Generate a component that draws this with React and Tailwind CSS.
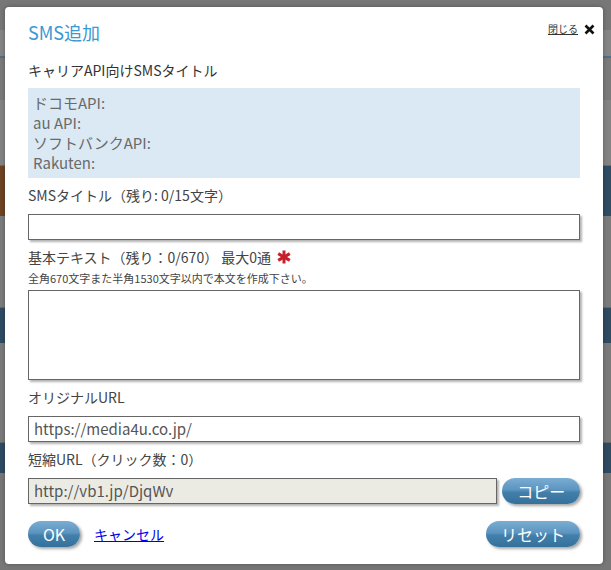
import React from "react";

const font = { fontFamily: '"Noto Sans CJK JP", "Noto Sans", sans-serif' };

function PillButton({ children, className = "" }) {
  return (
    <button
      className={`flex items-center justify-center rounded-full h-[26px] text-white text-[16px] leading-none bg-[linear-gradient(to_bottom,#7badd2_0%,#5c95c0_45%,#4280ab_55%,#34709a_100%)] shadow-[2px_2px_3px_rgba(0,0,0,0.35)] ${className}`}
    >
      {children}
    </button>
  );
}

function Asterisk() {
  return (
    <svg width="14" height="14" viewBox="0 0 14 14" className="ml-[6px]">
      <g stroke="#c8202a" strokeWidth="3" strokeLinecap="butt">
        <line x1="7" y1="0.5" x2="7" y2="13.5" />
        <line x1="1.2" y1="3.6" x2="12.8" y2="10.4" />
        <line x1="1.2" y1="10.4" x2="12.8" y2="3.6" />
      </g>
    </svg>
  );
}

export default function App() {
  return (
    <div className="relative w-[611px] h-[570px] overflow-hidden bg-[#757575]" style={font}>
      {/* page behind the overlay */}
      <div className="flex flex-col w-full">
        <div className="h-[30px] bg-[#777777]"></div>
        <div className="h-[28px] bg-[#858585] border-b-2 border-[#4d6f8a]"></div>
        <div className="h-[42px] bg-[#7a7a7a]"></div>
        <div className="h-[66px] bg-[#838383] border-b border-[#6a6a6a]"></div>
        <div className="h-[50px] bg-[linear-gradient(to_right,#6d4424_0_5px,#777_5px_598px,#2f4c63_598px)]"></div>
        <div className="h-[92px] bg-[#7b7b7b] border-b border-[#666]"></div>
        <div className="h-[35px] bg-[#2f4b62]"></div>
        <div className="h-[100px] bg-[#7a7a7a] border-b border-[#666]"></div>
        <div className="h-[30px] bg-[#2f4b62]"></div>
        <div className="h-[96px] bg-[#777777]"></div>
      </div>

      {/* dialog */}
      <div className="absolute left-[5px] top-[7px] w-[598px] h-[557px] bg-white rounded-[4px] px-[23px] pt-[13px] text-[#333] shadow-[0_0_4px_rgba(0,0,0,0.3)]">
        <div className="absolute right-[8px] top-[15px] flex items-center gap-[6px]">
          <span className="text-[10px] leading-[14px] underline text-[#333]">閉じる</span>
          <svg width="11" height="11" viewBox="0 0 11 11">
            <path d="M1.5 1.5 L9.5 9.5 M9.5 1.5 L1.5 9.5" stroke="#111" strokeWidth="2.6" />
          </svg>
        </div>

        <div className="text-[18px] leading-[24px] text-[#3a98d3]">SMS追加</div>

        <div className="mt-[16px] text-[14px] leading-[20px]">キャリアAPI向けSMSタイトル</div>

        <div className="mt-[8px] h-[90px] bg-[#dae9f4] pl-[5px] pt-[5px] text-[15px] leading-[20px] text-[#6a6a6a]">
          <div>ドコモAPI:</div>
          <div>au API:</div>
          <div>ソフトバンクAPI:</div>
          <div>Rakuten:</div>
        </div>

        <div className="mt-[7px] text-[14px] leading-[20px] text-[#444]">SMSタイトル（残り: 0/15文字）</div>
        <div className="mt-[9px] h-[26px] border border-[#666] bg-white shadow-[2px_2px_2px_rgba(0,0,0,0.3)]"></div>

        <div className="mt-[7px] flex items-center text-[14px] leading-[20px] text-[#444]">
          <span>基本テキスト（残り：0/670） 最大0通</span>
          <Asterisk />
        </div>
        <div className="mt-[4px] text-[11px] leading-[14px] text-[#444]">
          全角670文字また半角1530文字以内で本文を作成下さい。
        </div>
        <div className="mt-[5px] h-[90px] border border-[#666] bg-white shadow-[2px_2px_2px_rgba(0,0,0,0.3)]"></div>

        <div className="mt-[7px] text-[14px] leading-[20px] text-[#444]">オリジナルURL</div>
        <div className="mt-[9px] h-[26px] flex items-center pl-[5px] border border-[#666] bg-white shadow-[2px_2px_2px_rgba(0,0,0,0.3)] text-[15px] text-[#555]">
          https://media4u.co.jp/
        </div>

        <div className="mt-[7px] text-[14px] leading-[20px] text-[#444]">短縮URL（クリック数：0）</div>
        <div className="mt-[9px] flex items-center gap-[5px]">
          <div className="w-[471px] h-[26px] flex items-center pl-[5px] border border-[#666] bg-[#ebebe4] shadow-[2px_2px_2px_rgba(0,0,0,0.3)] text-[15px] text-[#555]">
            http://vb1.jp/DjqWv
          </div>
          <PillButton className="w-[78px]">コピー</PillButton>
        </div>

        <div className="mt-[17px] flex items-center">
          <PillButton className="w-[52px]">OK</PillButton>
          <a className="ml-[14px] text-[14px] leading-[20px] text-[#0000ee] underline">キャンセル</a>
          <PillButton className="ml-auto w-[94px]">リセット</PillButton>
        </div>
      </div>
    </div>
  );
}
